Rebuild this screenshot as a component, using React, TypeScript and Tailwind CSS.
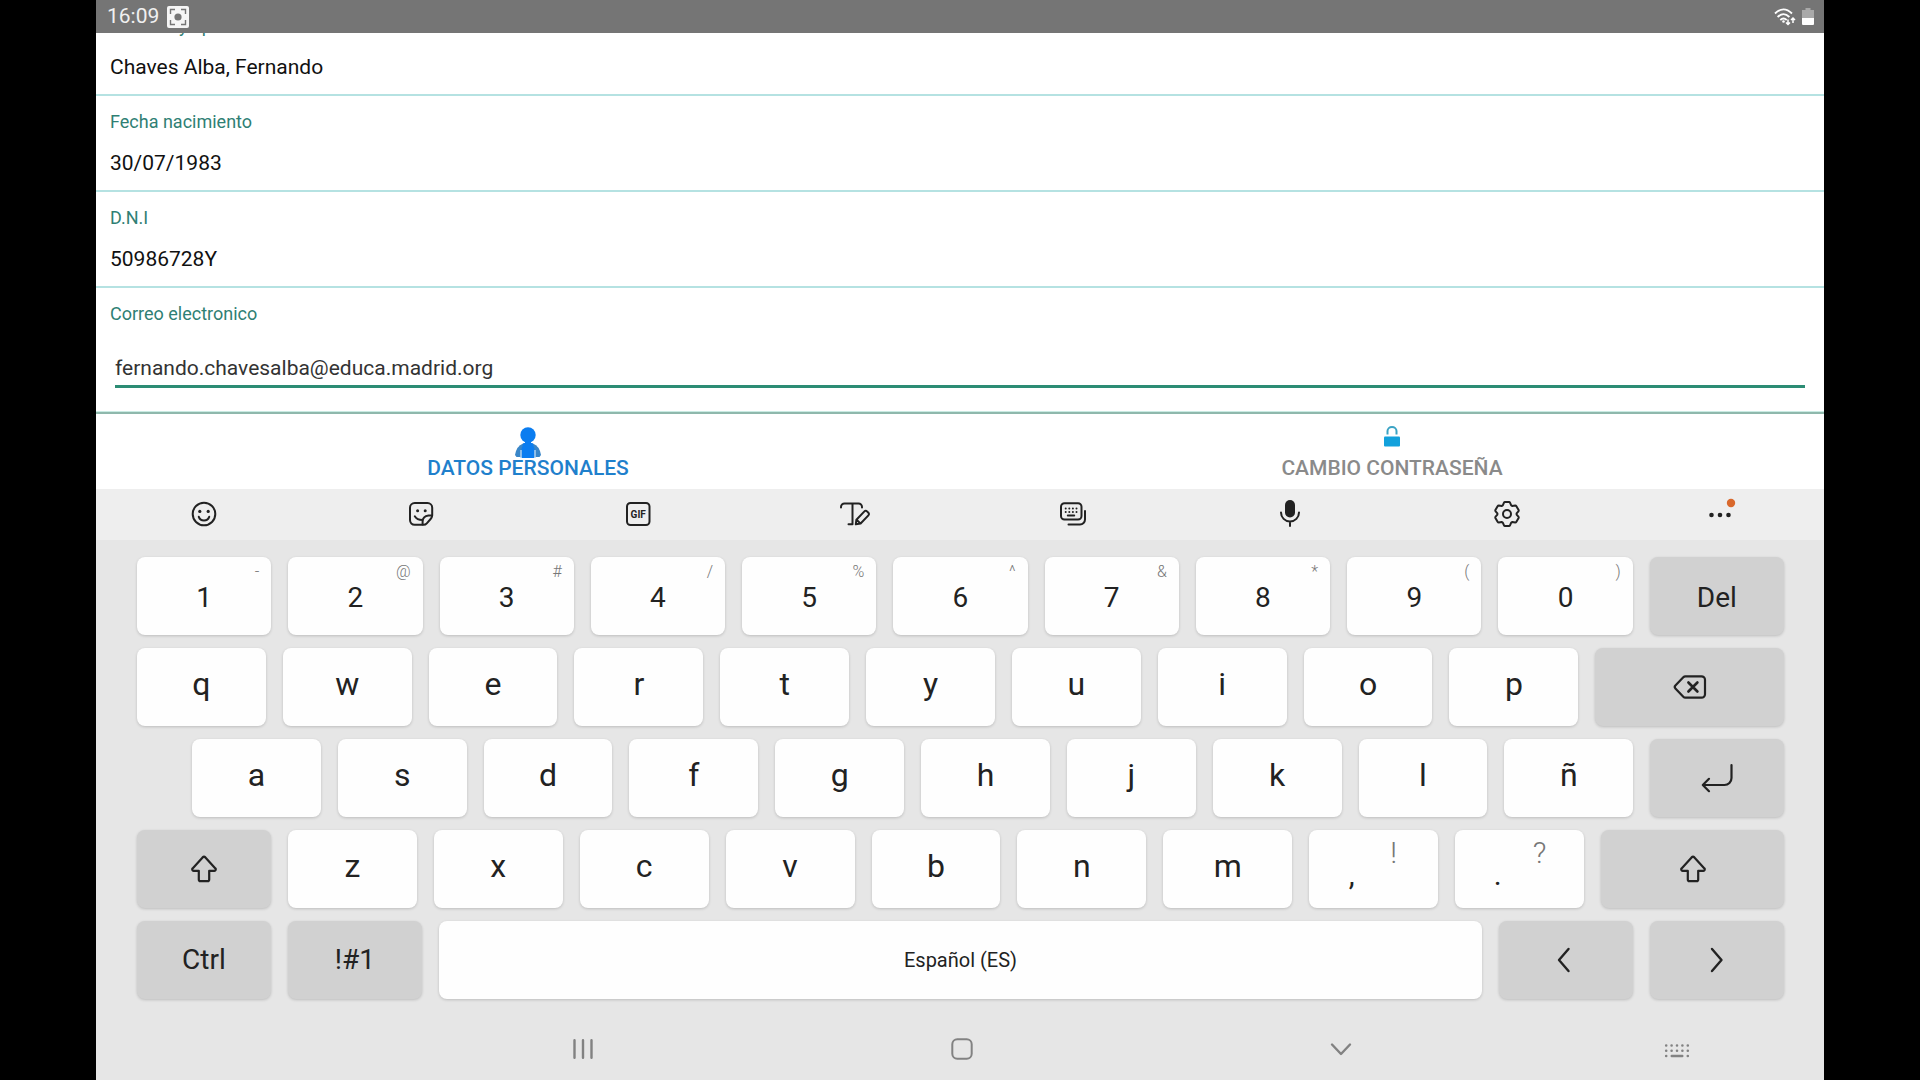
import type { ReactNode } from "react";
import clsx from "clsx";

const Icon = ({ className, children, width = 32, height = 32 }: { className?: string; children: ReactNode; width?: number; height?: number }) => (
  <svg
    aria-hidden="true"
    width={width}
    height={height}
    viewBox={`${-width / 2} ${-height / 2} ${width} ${height}`}
    fill="none"
    stroke="currentColor"
    strokeWidth="2"
    strokeLinecap="round"
    strokeLinejoin="round"
    className={className}
  >
    {children}
  </svg>
);

const ShiftIcon = () => (
  <Icon>
    <path strokeWidth="2.200" d="M-1.4-11.6a2 2 0 0 1 2.8 0L11.400-.6a1.400 1.400 0 0 1-1 2.400H5.200v8.600a1.700 1.700 0 0 1-1.700 1.700h-7a1.700 1.700 0 0 1-1.700-1.700V1.800h-5.200a1.400 1.400 0 0 1-1-2.400Z" />
  </Icon>
);

const BackspaceIcon = () => (
  <Icon width={36}>
    <path strokeWidth="2.200" d="M-4.500-10.700H11.500a3.500 3.500 0 0 1 3.500 3.500V7.200a3.500 3.500 0 0 1-3.500 3.500H-4.500a3 3 0 0 1-2.200-.9L-14.600 1.400a2 2 0 0 1 0-2.800L-6.700-9.800a3 3 0 0 1 2.200-.9Z" />
    <path strokeWidth="2.600" d="M-1.600-4.500 7.400 4.500M7.400-4.500-1.600 4.500" />
  </Icon>
);

const EnterIcon = () => (
  <Icon>
    <path strokeWidth="2.200" d="M14.500-13V0a7 7 0 0 1-7 7H-14M-8 .8-14.200 7-8 13.200" />
  </Icon>
);

const toolbar = [
  {
    name: "Emojis",
    icon: (
      <>
        <circle r="11.300" />
        <circle cx="-4.200" cy="-2.600" r="1.600" fill="currentColor" stroke="none" />
        <circle cx="4.200" cy="-2.600" r="1.600" fill="currentColor" stroke="none" />
        <path d="M-5.200 2.800a5.500 5.500 0 0 0 10.400 0" />
      </>
    ),
  },
  {
    name: "Stickers",
    icon: (
      <>
        <path d="M2.500 10.800H-6.300a4.700 4.700 0 0 1-4.700-4.700V-6.300A4.700 4.700 0 0 1-6.300-11H6.500A4.700 4.700 0 0 1 11.200-6.300V1.500Q11 3.500 9.600 5L5.800 9.300Q4.500 10.800 2.500 10.800Z" />
        <path d="M11 1.500H7.500Q1.800 2.200 1.600 7.500V10.500M-6.200 2.300Q-4 6 1.400 6" />
        <circle cx="-3.400" cy="-3.300" r="1.500" fill="currentColor" stroke="none" />
        <circle cx="4.200" cy="-3.300" r="1.500" fill="currentColor" stroke="none" />
      </>
    ),
  },
  {
    name: "GIF",
    icon: (
      <>
        <rect x="-11" y="-11" width="22.500" height="22" rx="3.500" />
        <text x="0.200" y="3.500" textAnchor="middle" fontSize="10" fontWeight="700" fill="currentColor" stroke="none">
          GIF
        </text>
      </>
    ),
  },
  {
    name: "Escritura a mano",
    icon: (
      <>
        <path d="M-14-6.500V-7a3.500 3.500 0 0 1 3.500-3.500H3.500A3.500 3.500 0 0 1 7-7v.5M-2.500-10.500V10.200H-6.500" />
        <path d="m.8 10.300.6-4.600 8-8.300a1.800 1.800 0 0 1 2.600 0l1.400 1.400a1.800 1.800 0 0 1 0 2.600L5.600 9.500ZM1.600 5.800l3.800 3.600" />
      </>
    ),
  },
  {
    name: "Modos de teclado",
    icon: (
      <>
        <rect x="-12" y="-10.800" width="20.500" height="16.300" rx="3.500" />
        <path strokeDasharray="0 3.600" d="M-7.300-5.500H3.600M-7.300-2H3.600" />
        <path d="M-5.200 1.600H1.200M12-3V5.500a5 5 0 0 1-5 5H-4.500" />
      </>
    ),
  },
  {
    name: "Dictado por voz",
    icon: (
      <>
        <rect x="-5" y="-14" width="10" height="17.500" rx="5" fill="currentColor" stroke="none" />
        <path d="M-9-1.500a9 9 0 0 0 18 0M0 7.500V12" />
      </>
    ),
  },
  {
    name: "Ajustes",
    icon: (
      <>
        <path d="M-4.200-8.600-3-11.300Q-2.700-12-2-12H2Q2.700-12 3-11.300L4.200-8.600 5.400-8 8.200-8.500Q9-8.500 9.400-7.800L11.600-4Q11.900-3.300 11.400-2.700L9.600-.6V.6L11.400 2.700Q11.900 3.300 11.600 4L9.400 7.800Q9 8.500 8.200 8.500L5.400 8 4.200 8.600 3 11.300Q2.700 12 2 12H-2Q-2.700 12-3 11.300L-4.200 8.600-5.400 8-8.200 8.500Q-9 8.500-9.400 7.800L-11.600 4Q-11.900 3.300-11.400 2.700L-9.600.6V-.6L-11.400-2.700Q-11.900-3.300-11.600-4L-9.400-7.800Q-9-8.500-8.200-8.500L-5.400-8Z" />
        <circle r="4" />
      </>
    ),
  },
  {
    name: "Más opciones",
    icon: (
      <>
        <g fill="currentColor" stroke="none">
          <circle cx="-12.500" cy="1" r="2.300" />
          <circle cx="-4" cy="1" r="2.300" />
          <circle cx="4.500" cy="1" r="2.300" />
        </g>
        <circle cx="7" cy="-11" r="4.200" fill="#d9682c" stroke="none" />
      </>
    ),
  },
];

type KeyProps = { children: ReactNode; dark?: boolean; hint?: string; className?: string; label?: string };

const Key = ({ children, dark, hint, className = "flex-[129] text-[32px] pb-1.5", label }: KeyProps) => (
  <button
    type="button"
    aria-label={label}
    className={clsx(
      "relative flex min-w-0 items-center justify-center rounded-lg leading-9 shadow-[0_1px_3px_rgba(0,0,0,0.18)]",
      dark ? "bg-[#d1d1d1]" : "bg-[#fefefe]",
      className
    )}
  >
    {children}
    {hint && <span className="absolute top-[7px] right-3 text-base leading-4 font-light text-[#777]">{hint}</span>}
  </button>
);

const Row = ({ children }: { children: ReactNode }) => <div className="flex h-[78px] gap-[17px]">{children}</div>;

const digits = [
  ["1", "-"], ["2", "@"], ["3", "#"], ["4", "/"], ["5", "%"],
  ["6", "^"], ["7", "&"], ["8", "*"], ["9", "("], ["0", ")"],
];

const Keyboard = () => (
  <div className="flex flex-col gap-[13px] pt-[17px] pr-10 pb-[19px] pl-[41px]">
    <Row>
      {digits.map(([digit, hint]) => (
        <Key key={digit} hint={hint} className="flex-[134] pt-1 text-[28px]">{digit}</Key>
      ))}
      <Key dark className="flex-[134] pt-1 text-[28px]">Del</Key>
    </Row>
    <Row>
      {[..."qwertyuiop"].map((letter) => <Key key={letter}>{letter}</Key>)}
      <Key dark label="Retroceso" className="flex-[189]"><BackspaceIcon /></Key>
    </Row>
    <Row>
      <div className="flex-[38]" />
      {[..."asdfghjklñ"].map((letter) => <Key key={letter}>{letter}</Key>)}
      <Key dark label="Intro" className="flex-[134]"><EnterIcon /></Key>
    </Row>
    <Row>
      <Key dark label="Mayúsculas" className="flex-[134]"><ShiftIcon /></Key>
      {[..."zxcvbnm"].map((letter) => <Key key={letter}>{letter}</Key>)}
      {[[",", "!"], [".", "?"]].map(([mark, alt]) => (
        <Key key={mark} className="flex-[129] gap-7 text-3xl">
          <span className="w-3 pt-3 text-center">{mark}</span>
          <span className="flex w-4 justify-center pb-8 font-light text-[#777]">{alt}</span>
        </Key>
      ))}
      <Key dark label="Mayúsculas" className="flex-[183]"><ShiftIcon /></Key>
    </Row>
    <Row>
      <Key dark className="flex-[134] text-[28px]">Ctrl</Key>
      <Key dark className="flex-[134] text-[28px]">!#1</Key>
      <Key className="flex-[1044] text-xl">Español (ES)</Key>
      <Key dark label="Izquierda" className="flex-[134]">
        <Icon><path strokeWidth="2.400" d="M2.500-11-7 0 2.500 11" /></Icon>
      </Key>
      <Key dark label="Derecha" className="flex-[134]">
        <Icon><path strokeWidth="2.400" d="M-5-11 4.500 0-5 11" /></Icon>
      </Key>
    </Row>
  </div>
);

const StatusBar = () => (
  <header className="flex h-[33px] items-center bg-[#757575] pr-2.5 pl-[11px] text-white">
    <span className="text-[21px] text-[#f0f0f0]">16:09</span>
    <svg aria-hidden="true" width="22" height="22" viewBox="0 0 22 22" className="ml-2">
      <rect width="22" height="22" rx="2" fill="#f5f5f5" />
      <path d="M3.500 8V3.500H8M14 3.500h4.500V8M18.500 14v4.500H14M8 18.500H3.500V14" fill="none" stroke="#757575" strokeWidth="1.400" />
      <circle cx="11" cy="11" r="3.600" fill="#757575" />
    </svg>
    <svg aria-hidden="true" width="22" height="18" viewBox="0 0 22 18" className="ml-auto">
      <g fill="none" stroke="#fff" strokeWidth="1.800">
        <path d="M1 5.500Q9.500-2.800 18 5.500M3.600 9Q9.500 3.200 15.400 9M6.300 12Q9.500 9 12.700 12" />
        <path strokeWidth="1.500" d="M14 11.500v5M12 14.500l2 2 2-2M19 15v-5M17 12l2-2 2 2" />
      </g>
      <circle cx="9.500" cy="13.500" r="1.300" fill="#fff" />
    </svg>
    <svg aria-hidden="true" width="12" height="18" viewBox="0 0 12 18" className="ml-1.5">
      <path d="M3.500 0h5v2H12v8H0V2h3.500Z" fill="#a9a9a9" />
      <path d="M0 10h12v6q0 1-1 1H1q-1 0-1-1Z" fill="#fff" />
    </svg>
  </header>
);

const fields = [
  { label: "Nombre y apellidos", value: "Chaves Alba, Fernando" },
  { label: "Fecha nacimiento", value: "30/07/1983" },
  { label: "D.N.I", value: "50986728Y" },
];

const App = () => (
  <div className="min-h-screen bg-black px-[5%] font-[Roboto,sans-serif]">
    <div className="flex min-h-screen flex-col bg-white">
      <StatusBar />
      <main className="overflow-hidden">
        {/* list is scrolled, the first label sits under the status bar */}
        <dl className="-mt-[33px]">
          {fields.map((field) => (
            <div key={field.label} className="h-24 border-b-2 border-[#b5e2e2] px-3.5 pt-3.5">
              <dt className="text-lg leading-6 text-[#2f7f74]">{field.label}</dt>
              <dd className="mt-[15px] text-[21px] leading-7 text-[#111]">{field.value}</dd>
            </div>
          ))}
        </dl>
        <form className="flex flex-col border-b-2 border-[#8fb8ac] px-3.5 pt-3.5 pb-6 shadow-[inset_0_-1px_#c9ebe3]">
          <label htmlFor="correo" className="text-lg leading-6 text-[#2f7f74]">Correo electronico</label>
          <input
            id="correo"
            type="email"
            defaultValue="fernando.chavesalba@educa.madrid.org"
            className="mx-[5px] mt-6 h-[38px] border-b-3 border-[#2c8c74] text-[21px] leading-7 text-[#333] outline-none"
          />
        </form>
      </main>

      <nav className="grid h-[75px] grid-cols-2 text-[21px] leading-5 font-medium">
        <button type="button" className="flex flex-col items-center pt-3 text-[#1f80cc]">
          <svg aria-hidden="true" width="28" height="32" viewBox="0 0 28 32" className="shrink-0">
            <path d="M9 17.500h10q6.500 2.500 8 11.500l-1.500 2h-23L1 29q1.500-9 8-11.500Z" fill="#3a86c8" />
            <path d="M9.500 17h9l2 6v9h-13v-9Z" fill="#0b7df0" />
            <path d="M7 24v8M21 24v8" stroke="#b5d6f2" strokeWidth="1.400" />
            <circle cx="14" cy="9" r="7.700" fill="#0b7df0" />
            <path d="M11 14h6v5h-6Z" fill="#0b7df0" />
          </svg>
          DATOS PERSONALES
        </button>
        <button type="button" className="flex flex-col items-center pt-3 text-[#8a8a8a]">
          <svg aria-hidden="true" width="16" height="32" viewBox="0 0 16 32" className="shrink-0">
            <path d="M3.500 8.500V5a4.500 4 0 0 1 9 0v3.500" fill="none" stroke="#3ba3c4" strokeWidth="2" />
            <rect y="10.500" width="16" height="10" rx="1" fill="#12a1dc" />
          </svg>
          CAMBIO CONTRASEÑA
        </button>
      </nav>

      <section aria-label="Teclado" className="flex-1 bg-[#e6e6e6] text-[#222]">
        <div className="flex h-[51px] items-center justify-between bg-[#eee] pr-[84px] pb-0.5 pl-[92px]">
          {toolbar.map((tool) => (
            <button key={tool.name} type="button" aria-label={tool.name}>
              <Icon>{tool.icon}</Icon>
            </button>
          ))}
        </div>
        <Keyboard />
        <div className="grid h-[62px] grid-cols-[297fr_379fr_379fr_379fr_294fr] items-center justify-items-center text-[#828282]">
          <button type="button" aria-label="Recientes" className="col-start-2">
            <Icon><path strokeWidth="2.400" d="M-8.500-8.800V8.800M0-8.800V8.800M8.500-8.800V8.800" /></Icon>
          </button>
          <button type="button" aria-label="Inicio">
            <Icon><rect x="-9.700" y="-9.700" width="19.400" height="19.400" rx="5" /></Icon>
          </button>
          <button type="button" aria-label="Ocultar teclado">
            <Icon><path strokeWidth="2.400" d="M-9-4.500 0 5 9-4.500" /></Icon>
          </button>
          <button type="button" aria-label="Cambiar teclado">
            <Icon>
              <path strokeWidth="2.600" strokeDasharray="0 5.400" d="M-10.800-3.500H11M-10.800 1.700H11M-10.800 7h.1M10.800 7h.1" />
              <path strokeWidth="2.400" d="M-5.300 7H5.300" />
            </Icon>
          </button>
        </div>
      </section>
    </div>
  </div>
);

export default App;
